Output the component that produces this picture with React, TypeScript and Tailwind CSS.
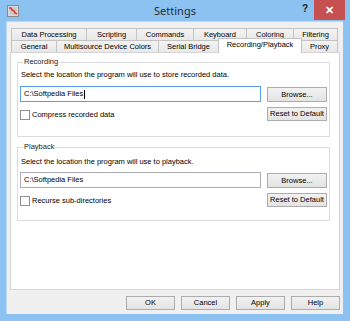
import React from "react";

const row1 = [
  { label: "Data Processing", w: "w-[76px]" },
  { label: "Scripting", w: "w-[51px]" },
  { label: "Commands", w: "w-[58px]" },
  { label: "Keyboard", w: "w-[54px]" },
  { label: "Coloring", w: "w-[48px]" },
  { label: "Filtering", w: "w-[45px]" },
];

const row2 = [
  { label: "General", w: "w-[46px]" },
  { label: "Multisource Device Colors", w: "w-[103px]" },
  { label: "Serial Bridge", w: "w-[61px]" },
  { label: "Recording/Playback", w: "w-[84px]", active: true },
  { label: "Proxy", w: "w-[37px]" },
];

function AppIcon() {
  return (
    <svg width="12" height="12" viewBox="0 0 12 12">
      <rect x="0.5" y="0.5" width="11" height="11" fill="#d9d9d9" stroke="#8a8a8a" />
      <path d="M2 2h1M2 4h8M2 6h8M2 8h8M4 2v8M6 2v8M8 2v8" stroke="#bdbdbd" strokeWidth="0.6" />
      <path d="M2 3 L4 3 L5 5 L7 6 L8 8 L10 9" stroke="#e0302a" strokeWidth="1.6" fill="none" />
    </svg>
  );
}

function Button({ label, className = "" }: { label: string; className?: string }) {
  return (
    <div
      className={`flex items-center justify-center border border-[#acacac] bg-gradient-to-b from-[#f2f2f2] to-[#e3e3e3] text-black ${className}`}
    >
      {label}
    </div>
  );
}

function Group({
  title,
  text,
  check,
  focused,
  className = "",
  textGap = "mt-[3px]",
  inputGap = "mt-[6px]",
}: {
  title: string;
  text: string;
  check: string;
  focused?: boolean;
  className?: string;
  textGap?: string;
  inputGap?: string;
}) {
  return (
    <fieldset className={`border border-[#dcdcdc] px-[2px] ${className}`}>
      <legend className="ml-[3px] px-[1px] leading-[10px] text-[#222]">{title}</legend>
      <div className={`${textGap} ml-[1px] leading-[10px]`}>{text}</div>
      <div className={`${inputGap} flex`}>
        <div className="w-[241px]">
          <div
            className={`h-[16px] border bg-white pl-[3px] flex items-center ${
              focused ? "border-[#569de5]" : "border-[#abadb3]"
            }`}
          >
            C:\Softpedia Files
            {focused && <span className="ml-[1px] inline-block h-[9px] w-px bg-black" />}
          </div>
          <div className="mt-[7px] flex items-center">
            <div className="h-[10px] w-[10px] border border-[#8e8f8f] bg-white" />
            <span className="ml-[2px]">{check}</span>
          </div>
        </div>
        <div className="ml-[6px] w-[60px] pt-[1px]">
          <Button label="Browse..." className="h-[15px]" />
          <Button label="Reset to Default" className="mt-[5px] h-[14px]" />
        </div>
      </div>
    </fieldset>
  );
}

export default function App() {
  return (
    <div className="flex h-[321px] w-[350px] flex-col overflow-hidden bg-[#8cc2f2] font-['Liberation_Sans',Arial,sans-serif] text-[7.5px] text-black">
      <div className="flex h-[21px] shrink-0 items-start">
        <div className="w-[60px] pl-[7px] pt-[5px]">
          <AppIcon />
        </div>
        <div className="flex-1 text-center text-[11px] leading-[21px] text-[#2b2b2b] font-['Noto_Sans',sans-serif]">
          Settings
        </div>
        <div className="flex w-[60px] justify-end pr-[5px]">
          <div className="mr-[6px] text-[10px] font-bold leading-[18px] text-[#222]">?</div>
          <div className="flex h-[20px] w-[31px] items-center justify-center bg-[#c75050] text-[11px] font-bold text-white">
            ✕
          </div>
        </div>
      </div>

      <div className="ml-[6px] mr-[7px] mb-[7px] flex flex-1 flex-col border-t border-l border-[#b9d9f6] bg-[#f0f0f0]">
        <div className="pl-[3px] pt-[6px]">
          <div className="flex pl-[1px]">
            {row1.map((t) => (
              <div
                key={t.label}
                className={`${t.w} -mr-px flex h-[12px] items-center justify-center border border-b-0 border-[#c3c3c3] bg-gradient-to-b from-[#f3f3f3] to-[#e8e8e8] leading-none`}
              >
                {t.label}
              </div>
            ))}
          </div>
          <div className="flex h-[12px] items-end pl-[1px]">
            {row2.map((t) =>
              t.active ? (
                <div
                  key={t.label}
                  className={`${t.w} relative z-10 -mr-px -mb-px flex h-[15px] items-start justify-center border border-b-0 border-[#c3c3c3] bg-white pt-[2px] leading-none`}
                >
                  {t.label}
                </div>
              ) : (
                <div
                  key={t.label}
                  className={`${t.w} -mr-px flex h-[12px] items-center justify-center border border-b-0 border-[#c3c3c3] bg-gradient-to-b from-[#f3f3f3] to-[#e8e8e8] leading-none`}
                >
                  {t.label}
                </div>
              )
            )}
          </div>
          <div className="h-[238px] w-[330px] border border-[#d4d4d4] bg-white pl-[6px]">
            <div className="w-[313px]">
              <Group
                title="Recording"
                text="Select the location the program will use to store recorded data."
                check="Compress recorded data"
                focused
                className="mt-[4px] pb-[15px]"
              />
              <Group
                title="Playback"
                text="Select the location the program will use to playback."
                check="Recurse sub-directories"
                className="mt-[5px] pb-[13px]"
                textGap="mt-[5px]"
                inputGap="mt-[5px]"
              />
            </div>
          </div>
        </div>
        <div className="mt-[6px] flex justify-end gap-[6px] pr-[3px]">
          <Button label="OK" className="h-[14px] w-[49px] border-[#5b9bd5]" />
          <Button label="Cancel" className="h-[14px] w-[49px]" />
          <Button label="Apply" className="h-[14px] w-[49px]" />
          <Button label="Help" className="h-[14px] w-[49px]" />
        </div>
      </div>
    </div>
  );
}
